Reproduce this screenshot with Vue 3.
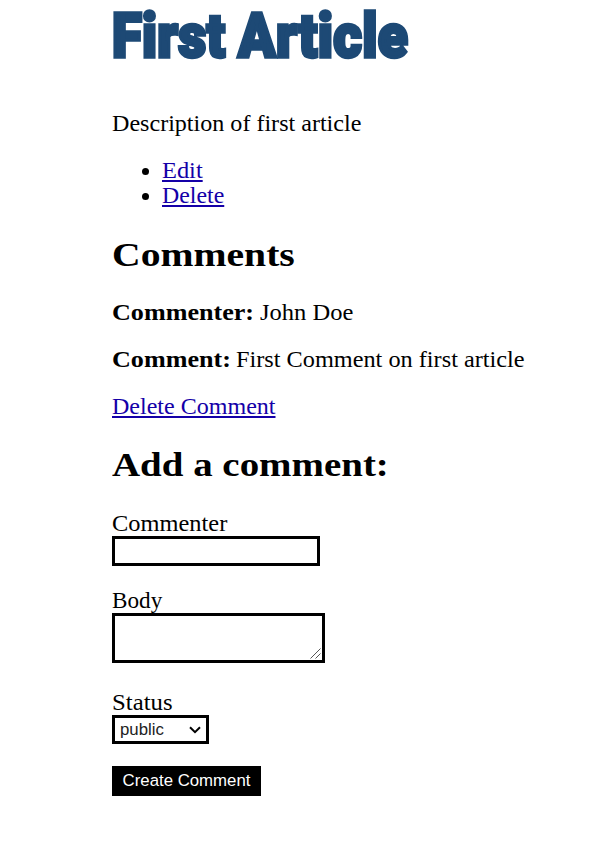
<script setup>
import { ref } from 'vue'
const commenter = ref('')
const body = ref('')
const status = ref('public')
</script>

<template>
  <main class="page">
    <h1><span class="word first">First</span> <span class="word article">Article</span></h1>
    <p><span class="fit t-desc">Description of first article</span></p>
    <ul>
      <li><a href="#" class="fit t-edit">Edit</a></li>
      <li><a href="#" class="fit t-delete">Delete</a></li>
    </ul>
    <h2 class="comments"><span class="fit t-comments">Comments</span></h2>
    <p class="pair"><strong class="fit t-commenter">Commenter:</strong><span class="fit t-name">John Doe</span></p>
    <p class="pair"><strong class="fit t-comment">Comment:</strong><span class="fit t-text">First Comment on first article</span></p>
    <p><a href="#" class="fit t-remove">Delete Comment</a></p>
    <h2><span class="fit t-add">Add a comment:</span></h2>
    <form @submit.prevent>
      <div class="field">
        <label for="commenter"><span class="fit t-label">Commenter</span></label>
        <input id="commenter" v-model="commenter" type="text" />
      </div>
      <div class="field body">
        <label for="body"><span class="fit t-body">Body</span></label>
        <div class="area">
          <textarea id="body" v-model="body"></textarea>
          <svg viewBox="0 0 11 11" width="11" height="11"><path d="M.5 10.5 10.5 .5M5.5 10.5 10.5 5.5" fill="none" stroke="#555" stroke-width="1" /></svg>
        </div>
      </div>
      <div class="field">
        <label for="status"><span class="fit t-status">Status</span></label>
        <div class="select">
          <select id="status" v-model="status">
            <option value="public">public</option>
            <option value="private">private</option>
          </select>
          <svg viewBox="0 0 12 8" width="12" height="8"><path d="M1 1.2 6 6.2 11 1.2" fill="none" stroke="#000" stroke-width="2" /></svg>
        </div>
      </div>
      <button type="submit">Create Comment</button>
    </form>
  </main>
</template>

<style>
body { background: #fff; }
</style>

<style scoped>
.page {
  box-sizing: border-box;
  height: 841px;
  padding-left: 112px;
  color: #000;
  font: 22.5px/25px "Liberation Serif", Georgia, serif;
  white-space: nowrap;
}
h1 { display: flex; margin: 0 0 43px; height: 68px; line-height: 72px; }
.word {
  color: #1d4975;
  font-family: Roboto, Impact, sans-serif;
  font-size: 62px;
  font-weight: 900;
  letter-spacing: 0.3px;
  -webkit-text-stroke: 3.5px #1d4975;
  transform-origin: 0 0;
}
.first { width: 126px; transform: scaleX(0.88); }
.article { transform: scaleX(0.892); }
.fit { display: inline-block; transform-origin: 0 0; }
.t-desc { transform: scaleX(1.07); }
.t-edit { transform: scaleX(1.085); }
.t-delete { transform: scaleX(1.06); }
.t-comments { transform: scaleX(1.166); }
.t-commenter { width: 148px; transform: scaleX(1.16); }
.t-comment { width: 124px; transform: scaleX(1.16); }
.t-name { transform: scaleX(1.09); }
.t-text { transform: scaleX(1.079); }
.t-remove { transform: scaleX(1.068); }
.t-add { transform: scaleX(1.145); }
.t-label { transform: scaleX(1.085); }
.t-body { transform: scaleX(1.03); }
.t-status { transform: scaleX(1.1); }
p { margin: 0 0 22px; }
.pair { display: flex; }
ul { margin: 0 0 22px; padding-left: 50px; }
a { color: #1400a8; text-decoration-thickness: 2px; text-underline-offset: 2px; }
h2 { box-sizing: border-box; margin: 0 0 26px; height: 44px; padding-top: 5px; font-size: 34px; line-height: 38px; }
h2.comments { padding-top: 6px; }
.field { height: 55px; margin-bottom: 22px; }
.field.body { height: 75px; margin-bottom: 27px; }
label { display: block; }
input, textarea {
  display: block;
  box-sizing: border-box;
  margin: 0;
  border: 3px solid #000;
  border-radius: 0;
  background: #fff;
  outline: none;
}
input { width: 208px; height: 30px; }
.area { display: grid; width: 213px; }
textarea { grid-area: 1 / 1; width: 213px; height: 50px; resize: none; }
.area svg { grid-area: 1 / 1; place-self: end; margin: 0 4px 4px 0; pointer-events: none; }
.select { display: grid; width: 97px; height: 29px; align-items: center; }
select {
  grid-area: 1 / 1;
  box-sizing: border-box;
  width: 97px;
  height: 29px;
  padding: 0 5px 1px;
  border: 3px solid #000;
  border-radius: 0;
  background: #fff;
  color: #222;
  font: 16.8px "Liberation Sans", sans-serif;
  appearance: none;
}
.select svg { grid-area: 1 / 1; justify-self: end; margin-right: 8px; pointer-events: none; }
button {
  display: block;
  width: 149px;
  height: 30px;
  margin-top: -1px;
  padding: 0;
  border: 0;
  background: #000;
  color: #fff;
  font: 16.8px "Liberation Sans", sans-serif;
}
</style>
